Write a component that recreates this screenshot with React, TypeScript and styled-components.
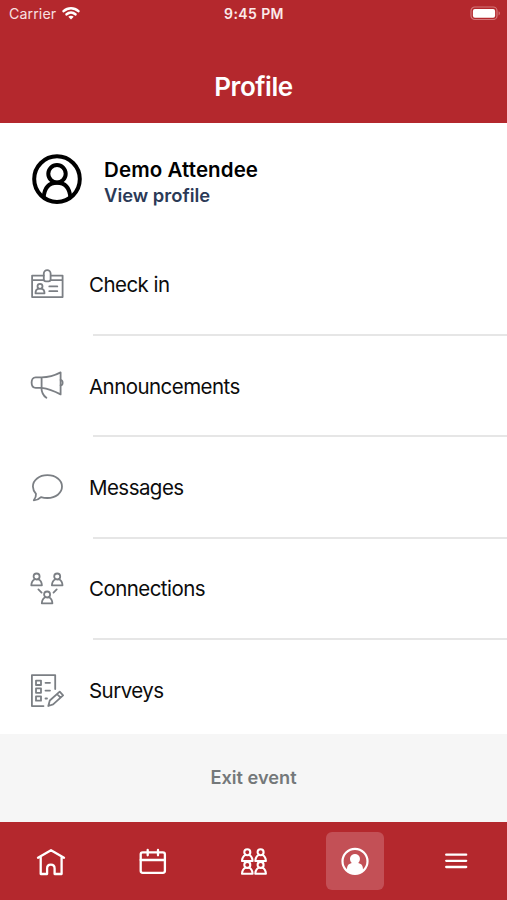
import React from "react";
import styled, { createGlobalStyle } from "styled-components";

const GlobalStyle = createGlobalStyle`
  * { box-sizing: border-box; }
  body { margin: 0; background: #fff; }
`;

const RED = "#b4282d";

const Screen = styled.div`
  display: flex;
  flex-direction: column;
  width: 507px;
  height: 900px;
  overflow: hidden;
  background: #fff;
  font-family: Inter, sans-serif;
  color: #0c0c0c;
`;

const Header = styled.header`
  flex: none;
  height: 123px;
  background: ${RED};
  color: #fff;
`;

const StatusBar = styled.div`
  display: grid;
  grid-template-columns: 1fr auto 1fr;
  align-items: center;
  height: 26px;
  padding: 0 6px 0 9px;
`;

const Carrier = styled.div`
  display: flex;
  align-items: center;
  gap: 6px;
  font-size: 14.2px;
  letter-spacing: 0.1px;
  color: #f8e0e1;
`;

const Clock = styled.div`
  margin-right: 2px;
  font-size: 14px;
  font-weight: 600;
  letter-spacing: 0.4px;
  color: #fbeaea;
`;

const Battery = styled.div`
  justify-self: end;
  display: flex;
`;

const Title = styled.h1`
  margin: 44px 0 0;
  text-align: center;
  font-size: 26px;
  line-height: 34px;
  font-weight: 600;
  letter-spacing: -0.45px;
`;

const ProfileRow = styled.section`
  flex: none;
  display: flex;
  align-items: center;
  gap: 22px;
  height: 110.6px;
  padding: 2px 0 0 32px;
`;

const ProfileText = styled.div`
  display: flex;
  flex-direction: column;
  padding-top: 6px;
`;

const Name = styled.div`
  font-size: 20.5px;
  line-height: 26px;
  font-weight: 600;
  letter-spacing: 0.1px;
  color: #000;
`;

const ProfileLink = styled.a`
  font-size: 18.4px;
  line-height: 25px;
  font-weight: 600;
  color: #2b3a57;
`;

const Menu = styled.nav`
  flex: none;
  height: 500.4px;
  overflow: hidden;
`;

const MenuRow = styled.div`
  display: flex;
  height: 101.4px;
  padding-left: 29px;
`;

const MenuIcon = styled.div`
  flex: none;
  display: flex;
  align-items: center;
  width: 60px;
  padding-top: 1.4px;
  color: #7b7f84;
`;

const MenuLabel = styled.div`
  display: flex;
  align-items: center;
  padding-top: 1px;
  font-size: 20.5px;
  letter-spacing: -0.55px;
`;

const Divider = styled.div`
  height: 2px;
  margin: -1px 0 -1px 93px;
  background: #e6e6e6;
`;

const ExitBar = styled.button`
  flex: none;
  height: 88px;
  border: 0;
  padding: 0 0 2px;
  background: #f6f6f6;
  color: #74787a;
  font: 600 18.2px Inter, sans-serif;
`;

const TabBar = styled.nav`
  flex: 1;
  display: grid;
  grid-template-columns: repeat(5, 1fr);
  align-items: center;
  justify-items: center;
  background: ${RED};
  color: #fff;
`;

const Tab = styled.div<{ $active?: boolean }>`
  display: flex;
  align-items: center;
  justify-content: center;
  width: 58px;
  height: 58px;
  border-radius: 6px;
  background: ${(p) => (p.$active ? "#c35056" : "transparent")};
`;

const Icon = styled.svg`
  display: block;
  fill: none;
  stroke: currentColor;
  stroke-linecap: round;
  stroke-linejoin: round;
`;

/* Small head-and-shoulders figure, 11 x 13 units, drawn from its top left corner. */
const Person = ({ x, y }: { x: number; y: number }) => (
  <g transform={`translate(${x} ${y})`}>
    <circle cx="5.5" cy="3.5" r="3" />
    <path d="M3.8 6.2C1.6 7.2 .4 8.2 .2 12.3h10.6C10.6 8.2 9.4 7.2 7.2 6.2" />
  </g>
);

const CheckInIcon = () => (
  <Icon width="36" height="36" viewBox="0 0 36 36" strokeWidth="1.8">
    <path d="M14.7 8.6H3.1v21.5h30.5V8.6H21.8M3.1 13.2h11.6M21.8 13.2h11.8" />
    <path d="M14.8 6.5a3.4 3.4 0 0 1 6.8 0v5.8a2 2 0 0 1-2 2h-2.8a2 2 0 0 1-2-2z" />
    <circle cx="11" cy="19.3" r="2.5" />
    <path d="M9.5 21.6c-2.3.6-3 2-3 4.7h9c0-2.7-.7-4.1-3-4.7M20.3 19.4h8M20.3 24.2h8" />
  </Icon>
);

const MegaphoneIcon = () => (
  <Icon width="36" height="36" viewBox="0 0.8 36 36" strokeWidth="1.8">
    <path d="M12.6 10.2H6.7c-2.6 0-4.1 2.1-4.1 5.2s1.5 5.3 4.1 5.3h5.9zM12.6 10.2c8 0 13.4-2 19-5v22c-5.6-3-11-5.5-19-6.5" />
    <path d="M31.6 12.8c2.7.5 2.7 4.9 0 5.4M12.4 20.7c.2 4.5 1.9 7.800 5 9.900" />
  </Icon>
);

const BubbleIcon = () => (
  <Icon width="36" height="36" viewBox="0 0 36 36" strokeWidth="1.8">
    <path d="M18.4 5.2c-8.2 0-14.5 4.8-14.5 11.4 0 3.1 1.3 5.3 3.1 7.2.3 2.5-.7 4.3-2.2 6.5 3.1-.2 5.3-1.2 7.2-3.2 2 .6 4.1.9 6.4.9 8.4 0 14.6-5 14.6-11.4S26.8 5.200 18.400 5.200z" />
  </Icon>
);

const ConnectionsIcon = () => (
  <Icon width="36" height="36" viewBox="0 0 36 36" strokeWidth="1.8">
    <Person x={2.1} y={2} />
    <Person x={22.7} y={2} />
    <Person x={12.6} y={20} />
    <path d="M9.4 18.4l3.2 3.2M27.7 18.4l-3.2 3.2" />
  </Icon>
);

const SurveyIcon = () => (
  <Icon width="36" height="36" viewBox="0 0.5 36 36" strokeWidth="1.8">
    <path d="M26.2 16.5V2.6H2.9v31H14.5" />
    <path d="M7 8.1h5v4.400H7zM7 15.900h5v4.400H7zM7 23.800h5v4.400H7zM16.500 10.300h4.500M16.500 18.100h4.500M16.500 26h1.500" />
    <path d="M19.300 33.500l1.500-5.500 9.900-8.800 3.400 3.700-10 9zM28.100 21.500l3.400 3.700" />
  </Icon>
);

const AvatarIcon = () => (
  <Icon width="50" height="50" viewBox="0 0 50 50" strokeWidth="4" color="#000">
    <circle cx="25" cy="25.1" r="22.8" />
    <circle cx="25" cy="19.7" r="8.7" />
    <path d="M11.7 43.5C12.3 34.5 16.5 28.8 25 28.8S37.700 34.500 38.300 43.500" />
  </Icon>
);

const WifiIcon = () => (
  <Icon width="18" height="14" viewBox="0 0 18 14" strokeWidth="2.6" color="#fff">
    <path d="M1.6 5.1c4.3-3.9 10.500-3.900 14.800 0M4.600 8.300c2.600-2.200 6.200-2.200 8.800 0" />
    <path d="M9 13.500L6.300 10.700c1.500-1.200 3.900-1.200 5.400 0z" fill="currentColor" stroke="none" />
  </Icon>
);

const BatteryIcon = () => (
  <Icon width="31" height="15" viewBox="0 0 31 15">
    <rect x="1" y="1" width="26" height="12.5" rx="3.8" stroke="#d4777b" strokeWidth="1.2" />
    <rect x="2.9" y="2.9" width="22.2" height="8.8" rx="2" fill="#fff" stroke="none" />
    <path d="M28.6 5.2v4.200c1.700-.6 1.700-3.600 0-4.200z" fill="#d4777b" stroke="none" />
  </Icon>
);

const HomeIcon = () => (
  <Icon width="30" height="30" viewBox="0.5 -1 30 30" strokeWidth="2.3">
    <path d="M2.5 10.700L15.500 3.200l13 7.500M5.200 10v17h6.400v-5.600c0-5 7.500-5 7.500 0v5.600h7V10" />
  </Icon>
);

const CalendarIcon = () => (
  <Icon width="30" height="30" viewBox="-0.9 -1 30 30" strokeWidth="2.3">
    <rect x="2.8" y="5.3" width="24.2" height="20.5" rx="2" />
    <path d="M2.8 13h24.200M9.800 2.900v5.400M20.100 2.900v5.400" />
  </Icon>
);

const GroupIcon = () => (
  <Icon width="30" height="30" viewBox="-0.6 -0.7 30 30" strokeWidth="2.1">
    <Person x={3.2} y={2} />
    <Person x={16.5} y={2} />
    <Person x={3.2} y={14.7} />
    <Person x={16.5} y={14.7} />
  </Icon>
);

const ActiveProfileIcon = () => (
  <Icon width="30" height="30" viewBox="0 -0.3 30 30" strokeWidth="2.2">
    <circle cx="15" cy="15" r="12.5" />
    <path
      d="M7 24.800c-.3-5.200 1-7.200 4.800-8.100-3.400-3.300-1.700-9.100 3.200-9.100s6.600 5.800 3.200 9.100c3.800.9 5.100 2.900 4.800 8.100-4.500 3.700-11.500 3.700-16 0z"
      fill="currentColor"
      stroke="none"
    />
  </Icon>
);

const BurgerIcon = () => (
  <Icon width="30" height="30" viewBox="0 -0.5 30 30" strokeWidth="2.3">
    <path d="M5.2 8.2h20M5.2 14.3h20M5.2 20.5h20" />
  </Icon>
);

const items = [
  { label: "Check in", icon: <CheckInIcon /> },
  { label: "Announcements", icon: <MegaphoneIcon /> },
  { label: "Messages", icon: <BubbleIcon /> },
  { label: "Connections", icon: <ConnectionsIcon /> },
  { label: "Surveys", icon: <SurveyIcon /> },
];

export default function App() {
  return (
    <Screen>
      <GlobalStyle />
      <Header>
        <StatusBar>
          <Carrier>
            Carrier
            <WifiIcon />
          </Carrier>
          <Clock>9:45 PM</Clock>
          <Battery>
            <BatteryIcon />
          </Battery>
        </StatusBar>
        <Title>Profile</Title>
      </Header>
      <ProfileRow>
        <AvatarIcon />
        <ProfileText>
          <Name>Demo Attendee</Name>
          <ProfileLink>View profile</ProfileLink>
        </ProfileText>
      </ProfileRow>
      <Menu>
        {items.map((item, i) => (
          <React.Fragment key={item.label}>
            {i > 0 && <Divider />}
            <MenuRow>
              <MenuIcon>{item.icon}</MenuIcon>
              <MenuLabel>{item.label}</MenuLabel>
            </MenuRow>
          </React.Fragment>
        ))}
      </Menu>
      <ExitBar>Exit event</ExitBar>
      <TabBar>
        <Tab><HomeIcon /></Tab>
        <Tab><CalendarIcon /></Tab>
        <Tab><GroupIcon /></Tab>
        <Tab $active><ActiveProfileIcon /></Tab>
        <Tab><BurgerIcon /></Tab>
      </TabBar>
    </Screen>
  );
}
